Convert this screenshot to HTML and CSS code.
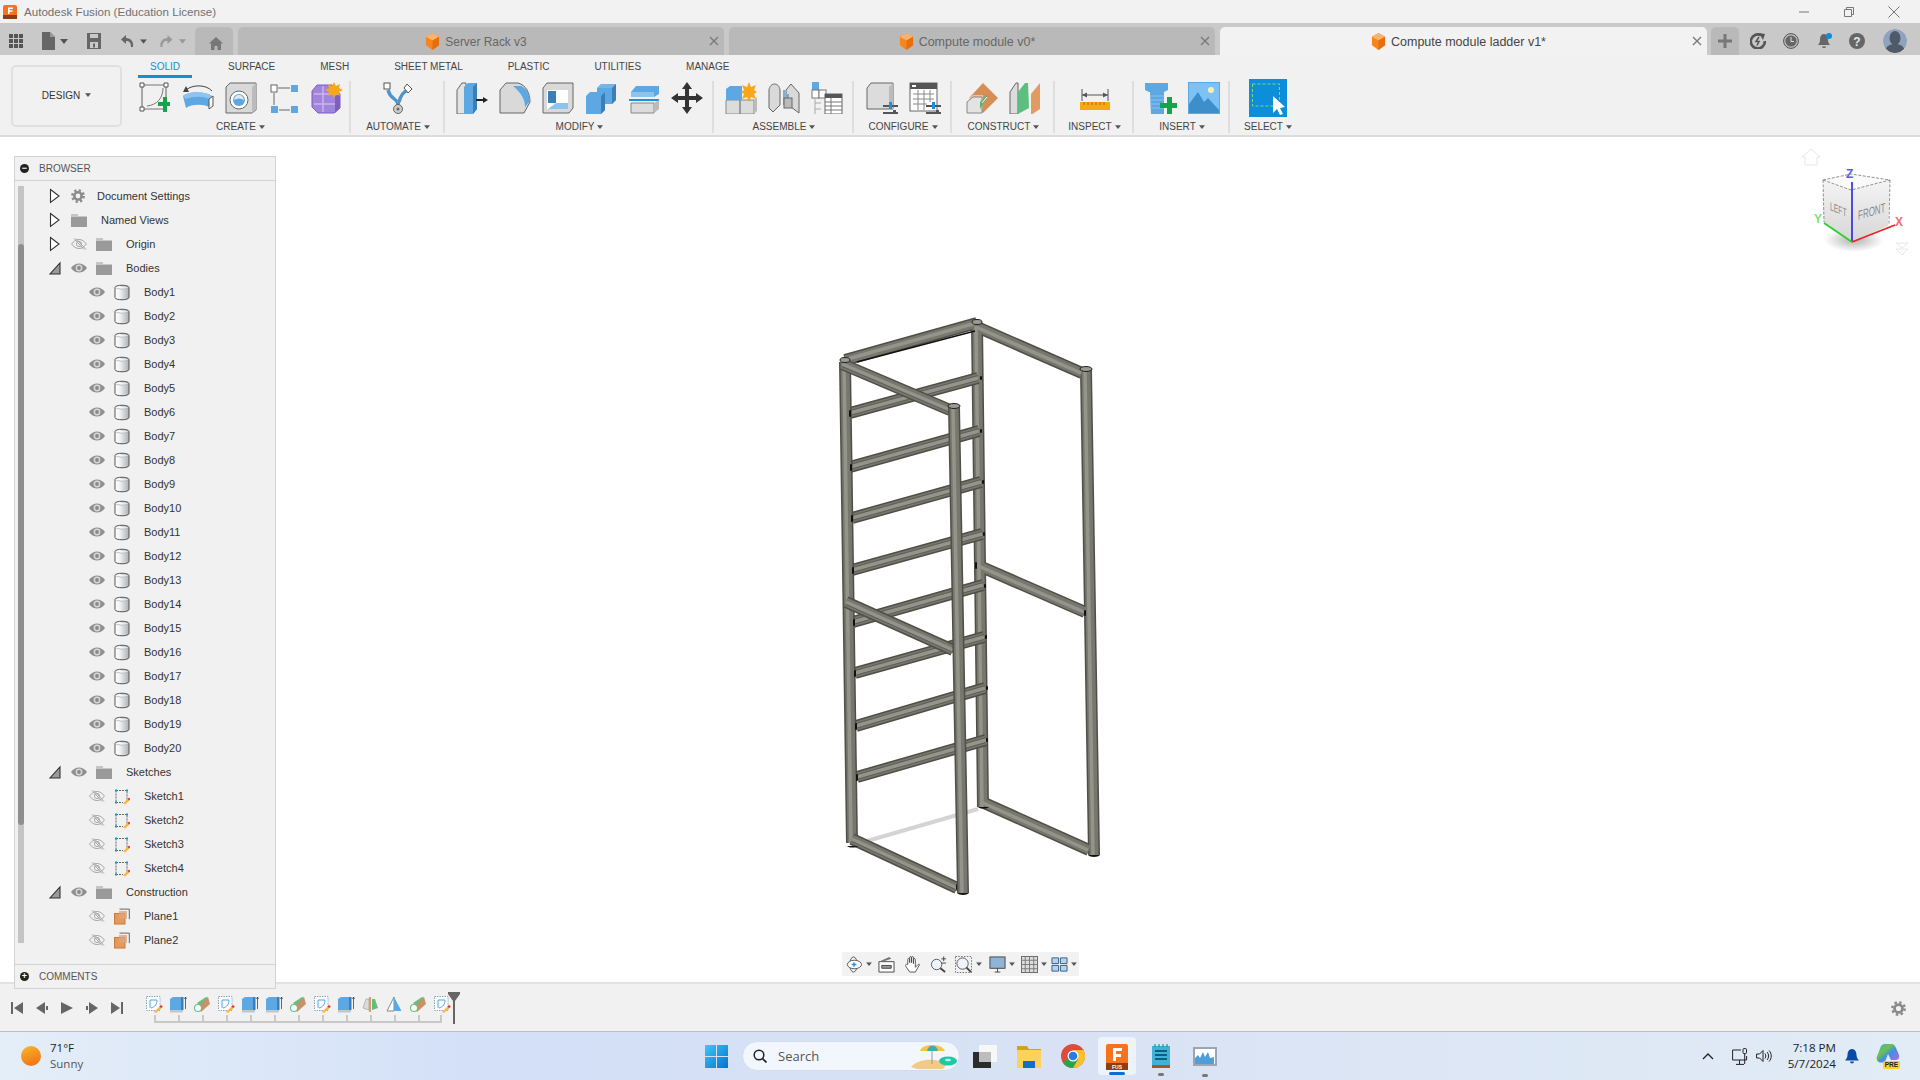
FILE: index.html
```html
<!DOCTYPE html>
<html lang="en">
<head>
<meta charset="utf-8">
<title>Autodesk Fusion</title>
<link rel="stylesheet" href="styles.css">
</head>
<body>
<svg class="defs" width="0" height="0" aria-hidden="true">
  <defs>
    <linearGradient id="bodyg" x1="0" x2="1"><stop offset="0" stop-color="#fff"/><stop offset=".35" stop-color="#f2f2f2"/><stop offset="1" stop-color="#a9aeb6"/></linearGradient>
    <symbol id="cube" viewBox="0 0 16 18"><path d="M8 0l7 4v9l-7 5-7-5V4z" fill="#f5861f"/><path d="M8 0l7 4-7 4-7-4z" fill="#fbb26c"/><path d="M8 8l7-4v9l-7 5z" fill="#e56f0c"/></symbol>
    <symbol id="x" viewBox="0 0 10 10"><path d="M1 1l8 8M9 1l-8 8" stroke="#777" stroke-width="1.3" fill="none"/></symbol>
    <symbol id="arrow-r" viewBox="0 0 12 16"><path d="M1.5 1.5L10 8l-8.500 6.500z" fill="#fff" stroke="#333" stroke-width="1.100"/></symbol>
    <symbol id="arrow-d" viewBox="0 0 12 16"><path d="M11 3v11H1z" fill="#999" stroke="#333" stroke-width="1.100"/></symbol>
    <symbol id="eye" viewBox="0 0 16 12"><path d="M0 6c4-6 12-6 16 0-4 6-12 6-16 0z" fill="#8f8f8f"/><circle cx="8" cy="6" r="3.400" fill="#d6d6d6"/><circle cx="8" cy="6" r="1.900" fill="#8a8a8a"/></symbol>
    <symbol id="eye-off" viewBox="0 0 16 12"><path d="M.6 6c4-6 10.800-6 14.800 0-4 6-10.800 6-14.800 0z" fill="none" stroke="#a8a8a8"/><circle cx="8" cy="6" r="2.600" fill="none" stroke="#a8a8a8"/><path d="M3 .5l10 11M5 .5l10 11" stroke="#a8a8a8" fill="none"/></symbol>
    <symbol id="folder" viewBox="0 0 16 13"><path d="M0 0h7v2H0z" fill="#c4c4c4"/><path d="M0 2.500h16V13H0z" fill="#9a9a9a"/></symbol>
    <symbol id="gear" viewBox="0 0 14 14"><circle cx="7" cy="7" r="3.700" fill="none" stroke="#8a8a8a" stroke-width="2.600"/><circle cx="7" cy="7" r="5.800" fill="none" stroke="#8a8a8a" stroke-width="2.200" stroke-dasharray="2.300 2.250"/></symbol>
    <symbol id="body" viewBox="0 0 16 17"><path d="M1 3.500C1 .5 15 .5 15 3.500v10c0 3-14 3-14 0z" fill="url(#bodyg)" stroke="#555"/><path d="M1.500 3.500c2 2 11 2 13 0" fill="#fff" stroke="#999" stroke-width=".6"/></symbol>
    <symbol id="sketch" viewBox="0 0 16 16"><path d="M2 2h11v9M2 2v12h7" fill="none" stroke="#666" stroke-dasharray="2 1"/><path d="M1 1h2v2H1zM1 13h2v2H1zM12 1h2v2h-2z" fill="#1c8fe0"/><path d="M9 15l5-5 2 1.500-5 4.500z" fill="#f6b73c"/><circle cx="15" cy="10.500" r="1.200" fill="#ee4040"/></symbol>
    <symbol id="plane" viewBox="0 0 16 16"><path d="M5.500.6h9.800v10" fill="none" stroke="#666"/><rect x=".5" y="5" width="10.500" height="10.500" fill="#e39a5c" stroke="#c87a3a"/><rect x="5" y="2.500" width="8" height="8" fill="#d9a67e" opacity=".8"/></symbol>
    <symbol id="caret" viewBox="0 0 8 5"><path d="M0 0h8L4 5z" fill="#555"/></symbol>
    <symbol id="tl-sketch" viewBox="0 0 17 17"><rect x=".5" y=".5" width="13.500" height="14" fill="#fff" stroke="#8ab" stroke-dasharray="1.500 1"/><path d="M4 4h7M4 4v8M11 4c0 4-2 7-6 8" fill="none" stroke="#2a8fdc" stroke-width=".8"/><path d="M8 16l6-6 2 1.500-6 5.500z" fill="#f6b73c"/><circle cx="15.200" cy="10.500" r="1.300" fill="#ee3030"/></symbol>
    <symbol id="tl-ext" viewBox="0 0 17 17"><rect x="0" y="13" width="13" height="3.500" fill="#c6c6c6"/><path d="M0 3l3-2h10v13H0z" fill="#5da7e2"/><path d="M11 1h2.500v13H11z" fill="#3a7fb8"/><path d="M15.500 13V1M14.500 3l1-2 1 2" stroke="#444" fill="none" stroke-width=".8"/></symbol>
    <symbol id="tl-pipe" viewBox="0 0 17 17"><path d="M4 8L14 1l2 7-9 8z" fill="#c99168"/><path d="M3 7l9-6 2 1L5 9z" fill="#67bd80"/><circle cx="4" cy="12" r="3.500" fill="#fff" stroke="#67bd80" stroke-width="1.100"/></symbol>
    <symbol id="tl-mid" viewBox="0 0 17 17"><path d="M1 12l3-9h3v11z" fill="#dcdcdc" stroke="#999" stroke-width=".6"/><path d="M10 3h3l3 9-6 2z" fill="#67bd80"/><path d="M7 1h2v15H7z" fill="#e09a62"/></symbol>
    <symbol id="tl-draft" viewBox="0 0 17 17"><path d="M8 1L1 15h7z" fill="#fff" stroke="#888"/><path d="M8 1l7.500 14H8z" fill="#5da7e2"/></symbol>
  </defs>
</svg>

<header class="titlebar">
  <div class="title-left">
    <svg class="app-icon" viewBox="0 0 14 14"><rect width="14" height="14" rx="2" fill="#f37321"/><rect y="10" width="14" height="4" fill="#8d3e13"/><path d="M5 2.500h5v1.400H6.600v1.400H9.500v1.400H6.600V9H5z" fill="#fff"/></svg>
    <span class="app-title">Autodesk Fusion (Education License)</span>
  </div>
  <div class="win-controls">
    <svg class="win-btn" viewBox="0 0 12 12"><path d="M1 6h10" stroke="#777" fill="none"/></svg>
    <svg class="win-btn" viewBox="0 0 12 12"><path d="M1.500 3.500h7v7h-7zM3.500 3.500v-2h7v7h-2" stroke="#777" fill="none"/></svg>
    <svg class="win-btn" viewBox="0 0 12 12"><path d="M.5.500l11 11M11.500.500l-11 11" stroke="#777" fill="none"/></svg>
  </div>
</header>

<nav class="tabbar">
  <svg class="q-grid" viewBox="0 0 14 14"><path d="M0 0h4v4H0zM5 0h4v4H5zM10 0h4v4h-4zM0 5h4v4H0zM5 5h4v4H5zM10 5h4v4h-4zM0 10h4v4H0zM5 10h4v4H5zM10 10h4v4h-4z" fill="#555"/></svg>
  <svg class="q-file" viewBox="0 0 13 18"><path d="M0 0h8l5 5v13H0z" fill="#666"/><path d="M8 0l5 5H8z" fill="#999"/></svg>
  <svg class="q-caret-a" viewBox="0 0 8 5"><use href="#caret"/></svg>
  <svg class="q-save" viewBox="0 0 14 16"><path d="M0 0h14v16H0z" fill="#666"/><path d="M3 1h8v4H3z" fill="#c9c9c9"/><path d="M3 9h8v6H3z" fill="#c9c9c9"/><path d="M6 10.500h2v4H6z" fill="#666"/></svg>
  <svg class="q-undo" viewBox="0 0 14 14"><path d="M6 1L1 5.500 6 10V7c3 0 5 1 5 6h2c1-5-2-9-7-9z" fill="#666"/></svg>
  <svg class="q-caret-b" viewBox="0 0 8 5"><use href="#caret"/></svg>
  <svg class="q-redo" viewBox="0 0 14 14"><path d="M8 1l5 4.500L8 10V7C5 7 3 8 3 13H1C0 8 3 4 8 4z" fill="#9a9a9a"/></svg>
  <svg class="q-caret-c" viewBox="0 0 8 5"><path d="M0 0h8L4 5z" fill="#999"/></svg>
  <div class="tab tab-home"><svg class="home-ic" viewBox="0 0 14 13"><path d="M7 0l7 6.500h-2V13H8.500V9h-3v4H2V6.500H0z" fill="#777"/></svg></div>
  <div class="tab"><span></span><span class="tab-mid"><svg class="cube"><use href="#cube"/></svg><span class="tab-name tab-name-sm">Server Rack v3</span></span><svg class="tab-x"><use href="#x"/></svg></div>
  <div class="tab"><span></span><span class="tab-mid"><svg class="cube"><use href="#cube"/></svg><span class="tab-name">Compute module v0*</span></span><svg class="tab-x"><use href="#x"/></svg></div>
  <div class="tab tab-active"><span></span><span class="tab-mid"><svg class="cube"><use href="#cube"/></svg><span class="tab-name">Compute module ladder v1*</span></span><svg class="tab-x"><use href="#x"/></svg></div>
  <div class="tab tab-plus"><svg class="plus-ic" viewBox="0 0 14 14"><path d="M5.500 0h3v5.500H14v3H8.500V14h-3V8.500H0v-3h5.500z" fill="#777"/></svg></div>
  <svg class="hd-ic hd-first" viewBox="0 0 16 16"><path d="M11 2.200A7 7 0 1 0 14.800 8" fill="none" stroke="#555" stroke-width="2.600"/><path d="M9 0l6 1-2 6z" fill="#555"/><path d="M9 4L6 8.500h3L7 12.500" fill="none" stroke="#555" stroke-width="1.500"/></svg>
  <svg class="hd-ic" viewBox="0 0 16 16"><circle cx="8" cy="8" r="7.400" fill="#bbb" stroke="#555" stroke-width="1"/><circle cx="8" cy="8" r="5.600" fill="#666"/><path d="M8 4v4.500h3" stroke="#ddd" fill="none"/></svg>
  <span class="bell-wrap"><svg class="hd-ic" viewBox="0 0 16 16"><path d="M8 1c3 0 4 3 4 6 0 2 1 4 2 5H2c1-1 2-3 2-5 0-3 1-6 4-6z" fill="#666"/><path d="M6 13.500h4c0 2-4 2-4 0z" fill="#666"/></svg><span class="bell-dot"></span></span>
  <svg class="hd-ic" viewBox="0 0 16 16"><circle cx="8" cy="8" r="8" fill="#666"/><text x="8" y="12.500" text-anchor="middle" class="help-q">?</text></svg>
  <svg class="avatar" viewBox="0 0 24 24"><defs><clipPath id="avc"><circle cx="12" cy="12" r="12"/></clipPath></defs><circle cx="12" cy="12" r="12" fill="#8fa3bf"/><g clip-path="url(#avc)"><ellipse cx="12" cy="9" rx="5.500" ry="7" fill="#4e5a68"/><path d="M2 24c0-7 5-9 10-9s10 2 10 9z" fill="#4e5a68"/></g></svg>
</nav>

<section class="toolbar">
  <button class="design-btn">DESIGN <svg class="caret"><use href="#caret"/></svg></button>
  <div class="tool-right">
    <div class="mode-tabs">
      <span class="mode mode-on">SOLID</span><span class="mode">SURFACE</span><span class="mode">MESH</span><span class="mode">SHEET METAL</span><span class="mode">PLASTIC</span><span class="mode">UTILITIES</span><span class="mode">MANAGE</span>
    </div>
    <div class="groups">
      <div class="group w-create">
        <div class="tools">
          <svg class="tool" viewBox="0 0 32 32"><path d="M3 3h24v24H3z" fill="none" stroke="#777" stroke-width="1.200"/><path d="M1 1h4v4H1zM25 1h4v4h-4zM1 25h4v4H1z" fill="#fff" stroke="#555"/><path d="M24 6c0 10-6 17-16 18" fill="none" stroke="#777"/><path d="M20 19h5v-5h4v5h3v4h-3v6h-4v-6h-5z" transform="translate(-1 1) scale(1)" fill="#16a34a"/></svg>
          <svg class="tool" viewBox="0 0 32 32"><path d="M1 14c6-5 22-5 29 0l-3 11c-5-3-18-3-23 1z" fill="#5da7e2"/><path d="M1 14c6-5 22-5 29 0l-3 3c-6-3-16-3-23 0z" fill="#8cc4ee"/><path d="M27 17l4-3v10l-4 3z" fill="#fff" stroke="#555"/><path d="M2 10C8 2 24 2 30 9" fill="none" stroke="#444"/><path d="M4 4L1 10l6 0z" fill="#444"/></svg>
          <svg class="tool" viewBox="0 0 32 32"><path d="M1 5l4-4h26v27l-4 3H1z" fill="#d9d9d9" stroke="#666"/><path d="M27 5l4-4v27l-4 3z" fill="#bbb"/><circle cx="14" cy="18" r="9" fill="#fff" stroke="#666"/><circle cx="14" cy="18" r="6" fill="#5da7e2"/><path d="M9 18a5 5 0 0 1 10 0 7 5 0 0 0-10 0z" fill="#dfe9f1"/></svg>
          <svg class="tool" viewBox="0 0 32 32"><rect x="3" y="3" width="6" height="7" fill="#fff" stroke="#666"/><rect x="23" y="3" width="7" height="7" fill="#5da7e2"/><rect x="3" y="24" width="7" height="7" fill="#5da7e2"/><rect x="23" y="24" width="7" height="7" fill="#5da7e2"/><path d="M10 6h12M11 28h11M6 11v12" stroke="#666" fill="none"/></svg>
          <svg class="tool" viewBox="0 0 32 32"><path d="M6 3h15l8 9v14l-6 5H7l-6-6V9z" fill="#a184db" stroke="#7d5fc2"/><path d="M3 12h24M3 22h22M12 4v26" stroke="#c8b7ee" stroke-width="1.500" fill="none"/><path d="M24 14l5-2v14l-5 5z" fill="#7d5fc2"/><path d="M23 0l2 4 4-2-1 4 4 2-4 2 1 4-4-2-2 4-2-4-4 2 1-4-4-2 4-2-1-4 4 2z" fill="#f9a71a"/></svg>
        </div>
        <div class="group-label">CREATE <svg class="caret"><use href="#caret"/></svg></div>
      </div>
      <div class="group w-automate">
        <div class="tools">
          <svg class="tool" viewBox="0 0 32 32"><path d="M6 8c2 8 7 8 9 12M26 8c-3 1-7 4-9 12" fill="none" stroke="#4d93cc" stroke-width="3.400"/><path d="M16 20v4" stroke="#4d93cc" stroke-width="4"/><rect x="2" y="1" width="6" height="6" fill="#fff" stroke="#555"/><path d="M25 2l5 5-4 4-4-5z" fill="#fff" stroke="#555"/><circle cx="16" cy="27" r="4.500" fill="#ccc" stroke="#666"/><circle cx="16" cy="27" r="1.500" fill="#666"/></svg>
        </div>
        <div class="group-label">AUTOMATE <svg class="caret"><use href="#caret"/></svg></div>
      </div>
      <div class="group w-modify">
        <div class="tools">
          <svg class="tool" viewBox="0 0 32 32"><path d="M1 8l5-7h4v31H1z" fill="#e3e3e3" stroke="#666"/><path d="M8 5l4-4h9v26l-4 5H8z" fill="#5da7e2"/><path d="M17 5l4-4v26l-4 5z" fill="#3a7fb8"/><path d="M20 18h9" stroke="#222" stroke-width="2"/><path d="M32 18l-5-3v6z" fill="#222"/></svg>
          <svg class="tool" viewBox="0 0 32 32"><path d="M1 8l6-7h12c8 2 12 10 12 19l-6 11H1z" fill="#d9d9d9" stroke="#666"/><path d="M14 4h8c5 2 9 8 9 15l-5 6c0-8-4-14-12-21z" fill="#5da7e2"/></svg>
          <svg class="tool" viewBox="0 0 32 32"><path d="M1 6l4-5h26v25l-4 5H1z" fill="#d9d9d9" stroke="#666"/><path d="M5 8h21v19H5z" fill="#fff"/><path d="M6 9h8v12H6z" fill="#3a7fb8"/><path d="M6 27l8-6h12v6z" fill="#8cc4ee"/></svg>
          <svg class="tool" viewBox="0 0 32 32"><path d="M12 6l4-4h15v16l-4 4H12z" fill="#5da7e2"/><path d="M12 6h15v16l4-4V2H16z" fill="#8cc4ee" opacity=".5"/><path d="M1 14l4-4h15v18l-4 4H1z" fill="#5da7e2"/><path d="M27 6l4-4v16l-4 4z" fill="#3a7fb8"/><path d="M16 14l4-4v18l-4 4z" fill="#3a7fb8"/></svg>
          <svg class="tool" viewBox="0 0 32 32"><path d="M3 10l5-6h23v8l-5 3H3z" fill="#5da7e2"/><path d="M3 10h23v5H3z" fill="#8cc4ee"/><path d="M1 18h30" stroke="#1c8fe0" stroke-width="2"/><path d="M3 21h23v10H3z" fill="#dcdcdc" stroke="#888"/><path d="M26 21l5-3v9l-5 4z" fill="#bbb"/></svg>
          <svg class="tool" viewBox="0 0 32 32"><path d="M16 0l5 7h-3v7h7v-3l7 5-7 5v-3h-7v7h3l-5 7-5-7h3v-7H7v3l-7-5 7-5v3h7V7h-3z" fill="#333"/></svg>
        </div>
        <div class="group-label">MODIFY <svg class="caret"><use href="#caret"/></svg></div>
      </div>
      <div class="group w-assemble">
        <div class="tools">
          <svg class="tool" viewBox="0 0 32 32"><path d="M1 18h14v14H1zM15 18h14v14H15z" fill="#dcdcdc" stroke="#888"/><path d="M29 18l3-3v14l-3 3z" fill="#bbb"/><path d="M1 7l4-3h12v14H1z" fill="#5da7e2"/><path d="M24 0l2 5 5-2-2 5 3 2-3 2 2 5-5-2-2 5-2-5-5 2 2-5-3-2 3-2-2-5 5 2z" fill="#f9a71a"/></svg>
          <svg class="tool" viewBox="0 0 32 32"><path d="M1 8c1-8 10-8 11 0v15l-7 7-4-4z" fill="#d9d9d9" stroke="#666"/><path d="M18 8l5-6 8 9v20l-8-6H18z" fill="#d9d9d9" stroke="#666"/><path d="M16 8v15M20 12v12" stroke="#4d93cc" fill="none" stroke-width="1.400"/><rect x="16" y="16" width="8" height="10" fill="#bbb" stroke="#666"/></svg>
          <svg class="tool" viewBox="0 0 32 32"><rect x="1" y="0" width="7" height="8" fill="#5da7e2"/><rect x="1" y="8" width="7" height="8" fill="#fff" stroke="#777"/><rect x="8" y="8" width="7" height="8" fill="#fff" stroke="#777"/><path d="M4 17v15M4 21h6M4 27h6" stroke="#aaa" fill="none"/><rect x="14" y="12" width="17" height="20" fill="#fff" stroke="#666"/><rect x="14" y="12" width="17" height="4" fill="#555"/><path d="M14 20h17M14 24h17M14 28h17M20 16v16" stroke="#777" fill="none"/></svg>
        </div>
        <div class="group-label">ASSEMBLE <svg class="caret"><use href="#caret"/></svg></div>
      </div>
      <div class="group w-config">
        <div class="tools">
          <svg class="tool" viewBox="0 0 32 32"><path d="M1 6l4-5h22v26H1z" fill="#dcdcdc" stroke="#666"/><path d="M23 5l4-4v26h-4z" fill="#bbb"/><path d="M17 24h15M17 31h15" stroke="#555" stroke-width="2"/><path d="M23 20h3v7h-3z" fill="#1c8fe0"/><path d="M27 28h3v4h-3z" fill="#555"/></svg>
          <svg class="tool" viewBox="0 0 32 32"><rect x="1" y="1" width="27" height="28" fill="#fff" stroke="#666"/><rect x="1" y="1" width="27" height="6" fill="#555"/><rect x="3" y="3" width="4" height="2" fill="#fff"/><path d="M4 12h21M4 17h21M4 22h14M9 8v20M15 8v20M21 8v12" stroke="#888" fill="none"/><path d="M17 24h15M17 31h15" stroke="#555" stroke-width="2"/><path d="M23 20h3v7h-3z" fill="#1c8fe0"/><path d="M27 28h3v4h-3z" fill="#555"/></svg>
        </div>
        <div class="group-label">CONFIGURE <svg class="caret"><use href="#caret"/></svg></div>
      </div>
      <div class="group w-construct">
        <div class="tools">
          <svg class="tool" viewBox="0 0 32 32"><path d="M17 1l15 15-15 15L3 16z" fill="#d68d56"/><path d="M3 16l4-3h10v14H3z" fill="#f2d9c2" opacity=".7"/><path d="M1 20l6-5h9v16H1z" fill="#e3e3e3" stroke="#888"/><path d="M14 20l7-7 1 1-8 13z" fill="#58b46f"/><path d="M16 21l5-6" stroke="#fff"/></svg>
          <svg class="tool" viewBox="0 0 32 32"><path d="M1 10l6-9h2v31H1z" fill="#dcdcdc" stroke="#666"/><path d="M9 10l7-9h3l1 25-11 6z" fill="#5cbf80"/><path d="M22 12l9-11v26l-9 6z" fill="#e09a62"/></svg>
        </div>
        <div class="group-label">CONSTRUCT <svg class="caret"><use href="#caret"/></svg></div>
      </div>
      <div class="group w-inspect">
        <div class="tools">
          <svg class="tool" viewBox="0 0 32 32"><path d="M3 7v12M29 7v12M3 13h26" stroke="#555" fill="none"/><path d="M3 13l5-2.500v5zM29 13l-5-2.500v5z" fill="#555"/><rect x="1" y="20" width="30" height="8" fill="#f9a71a"/><path d="M5 20v3M9 20v3M13 20v3M17 20v3M21 20v3M25 20v3" stroke="#a86e05" fill="none"/></svg>
        </div>
        <div class="group-label">INSPECT <svg class="caret"><use href="#caret"/></svg></div>
      </div>
      <div class="group w-insert">
        <div class="tools">
          <svg class="tool" viewBox="0 0 32 32"><path d="M0 1h23v7l-4 2H4L0 8z" fill="#5da7e2"/><path d="M5 10h14v22H6z" fill="#5da7e2"/><path d="M5 14h14M5 18h14M5 22h14M5 26h14" stroke="#8cc4ee" fill="none"/><path d="M15 21h7v-6h5v6h5v5h-5v6h-5v-6h-7z" fill="#16a34a"/></svg>
          <svg class="tool" viewBox="0 0 32 32"><rect x=".5" y=".5" width="31" height="31" fill="#7ec2f5" stroke="#5da7e2"/><circle cx="23" cy="8" r="3" fill="#ffeeb0"/><path d="M1 31V22l9-12 6 10 4-4 11 12v3z" fill="#3d8fcb"/></svg>
        </div>
        <div class="group-label">INSERT <svg class="caret"><use href="#caret"/></svg></div>
      </div>
      <div class="group w-select">
        <div class="tools">
          <svg class="tool-lg" viewBox="0 0 38 38"><rect width="38" height="38" fill="#0c8ed9"/><rect x="3.500" y="5" width="27" height="22" fill="none" stroke="#7ed87e" stroke-dasharray="3 2"/><path d="M24 17v17l4-4 3 6 3-1-3-6 5-1z" fill="#fff"/></svg>
        </div>
        <div class="group-label">SELECT <svg class="caret"><use href="#caret"/></svg></div>
      </div>
    </div>
  </div>
</section>

<main class="canvas">
  <aside class="browser">
    <div class="panel-head"><span class="round-ic">&#8722;</span>BROWSER</div>
    <div class="tree-wrap">
      <div class="scrollbar"><div class="thumb"></div></div>
      <div class="tree">
        <div class="row lv0"><svg class="s-arrow"><use href="#arrow-r"/></svg><svg class="s-gear"><use href="#gear"/></svg><span>Document Settings</span></div>
        <div class="row lv0"><svg class="s-arrow"><use href="#arrow-r"/></svg><svg class="s-folder"><use href="#folder"/></svg><span>Named Views</span></div>
        <div class="row lv0"><svg class="s-arrow"><use href="#arrow-r"/></svg><svg class="s-eye"><use href="#eye-off"/></svg><svg class="s-folder"><use href="#folder"/></svg><span>Origin</span></div>
        <div class="row lv0"><svg class="s-arrow"><use href="#arrow-d"/></svg><svg class="s-eye"><use href="#eye"/></svg><svg class="s-folder"><use href="#folder"/></svg><span>Bodies</span></div>
        <div class="row lv1"><svg class="s-eye"><use href="#eye"/></svg><svg class="s-item"><use href="#body"/></svg><span>Body1</span></div>
        <div class="row lv1"><svg class="s-eye"><use href="#eye"/></svg><svg class="s-item"><use href="#body"/></svg><span>Body2</span></div>
        <div class="row lv1"><svg class="s-eye"><use href="#eye"/></svg><svg class="s-item"><use href="#body"/></svg><span>Body3</span></div>
        <div class="row lv1"><svg class="s-eye"><use href="#eye"/></svg><svg class="s-item"><use href="#body"/></svg><span>Body4</span></div>
        <div class="row lv1"><svg class="s-eye"><use href="#eye"/></svg><svg class="s-item"><use href="#body"/></svg><span>Body5</span></div>
        <div class="row lv1"><svg class="s-eye"><use href="#eye"/></svg><svg class="s-item"><use href="#body"/></svg><span>Body6</span></div>
        <div class="row lv1"><svg class="s-eye"><use href="#eye"/></svg><svg class="s-item"><use href="#body"/></svg><span>Body7</span></div>
        <div class="row lv1"><svg class="s-eye"><use href="#eye"/></svg><svg class="s-item"><use href="#body"/></svg><span>Body8</span></div>
        <div class="row lv1"><svg class="s-eye"><use href="#eye"/></svg><svg class="s-item"><use href="#body"/></svg><span>Body9</span></div>
        <div class="row lv1"><svg class="s-eye"><use href="#eye"/></svg><svg class="s-item"><use href="#body"/></svg><span>Body10</span></div>
        <div class="row lv1"><svg class="s-eye"><use href="#eye"/></svg><svg class="s-item"><use href="#body"/></svg><span>Body11</span></div>
        <div class="row lv1"><svg class="s-eye"><use href="#eye"/></svg><svg class="s-item"><use href="#body"/></svg><span>Body12</span></div>
        <div class="row lv1"><svg class="s-eye"><use href="#eye"/></svg><svg class="s-item"><use href="#body"/></svg><span>Body13</span></div>
        <div class="row lv1"><svg class="s-eye"><use href="#eye"/></svg><svg class="s-item"><use href="#body"/></svg><span>Body14</span></div>
        <div class="row lv1"><svg class="s-eye"><use href="#eye"/></svg><svg class="s-item"><use href="#body"/></svg><span>Body15</span></div>
        <div class="row lv1"><svg class="s-eye"><use href="#eye"/></svg><svg class="s-item"><use href="#body"/></svg><span>Body16</span></div>
        <div class="row lv1"><svg class="s-eye"><use href="#eye"/></svg><svg class="s-item"><use href="#body"/></svg><span>Body17</span></div>
        <div class="row lv1"><svg class="s-eye"><use href="#eye"/></svg><svg class="s-item"><use href="#body"/></svg><span>Body18</span></div>
        <div class="row lv1"><svg class="s-eye"><use href="#eye"/></svg><svg class="s-item"><use href="#body"/></svg><span>Body19</span></div>
        <div class="row lv1"><svg class="s-eye"><use href="#eye"/></svg><svg class="s-item"><use href="#body"/></svg><span>Body20</span></div>
        <div class="row lv0"><svg class="s-arrow"><use href="#arrow-d"/></svg><svg class="s-eye"><use href="#eye"/></svg><svg class="s-folder"><use href="#folder"/></svg><span>Sketches</span></div>
        <div class="row lv1"><svg class="s-eye"><use href="#eye-off"/></svg><svg class="s-item"><use href="#sketch"/></svg><span>Sketch1</span></div>
        <div class="row lv1"><svg class="s-eye"><use href="#eye-off"/></svg><svg class="s-item"><use href="#sketch"/></svg><span>Sketch2</span></div>
        <div class="row lv1"><svg class="s-eye"><use href="#eye-off"/></svg><svg class="s-item"><use href="#sketch"/></svg><span>Sketch3</span></div>
        <div class="row lv1"><svg class="s-eye"><use href="#eye-off"/></svg><svg class="s-item"><use href="#sketch"/></svg><span>Sketch4</span></div>
        <div class="row lv0"><svg class="s-arrow"><use href="#arrow-d"/></svg><svg class="s-eye"><use href="#eye"/></svg><svg class="s-folder"><use href="#folder"/></svg><span>Construction</span></div>
        <div class="row lv1"><svg class="s-eye"><use href="#eye-off"/></svg><svg class="s-item"><use href="#plane"/></svg><span>Plane1</span></div>
        <div class="row lv1"><svg class="s-eye"><use href="#eye-off"/></svg><svg class="s-item"><use href="#plane"/></svg><span>Plane2</span></div>
      </div>
    </div>
    <div class="panel-foot"><span class="round-ic">+</span>COMMENTS</div>
  </aside>

  <svg class="rack" viewBox="820 300 300 640">
    <defs>
      <g id="rk-back">
        <line x1="977" y1="326" x2="983" y2="807"/>
        <line x1="1086" y1="370" x2="1094" y2="855"/>
        <line x1="977" y1="327" x2="1082" y2="373"/>
        <line x1="977" y1="565" x2="1085" y2="612"/>
        <line x1="982" y1="802" x2="1089" y2="850"/>
        <line x1="845" y1="360" x2="977" y2="323"/>
      </g>
      <g id="rk-rungs">
        <line x1="850" y1="413" x2="978" y2="378"/>
        <line x1="850" y1="467" x2="979" y2="431"/>
        <line x1="852" y1="518" x2="981" y2="482"/>
        <line x1="852" y1="570" x2="982" y2="534"/>
        <line x1="853" y1="622" x2="983" y2="585"/>
        <line x1="855" y1="673" x2="984" y2="637"/>
        <line x1="856" y1="726" x2="985" y2="688"/>
        <line x1="857" y1="777" x2="986" y2="740"/>
      </g>
      <g id="rk-left">
        <line x1="845" y1="362" x2="852" y2="843"/>
      </g>
      <g id="rk-side">
        <line x1="842" y1="364" x2="950" y2="410"/>
        <line x1="846" y1="602" x2="953" y2="650"/>
        <line x1="852" y1="839" x2="957" y2="888"/>
      </g>
      <g id="rk-front">
        <line x1="954" y1="407" x2="963" y2="893"/>
      </g>
    </defs>
    <line class="rk-shadow" x1="867" y1="841" x2="978" y2="809"/>
    <use href="#rk-back" class="tb-a"/><use href="#rk-back" class="tb-b"/><use href="#rk-back" class="tb-c" transform="translate(-1 0)"/>
    <line class="rk-black" x1="857" y1="362" x2="975" y2="331"/>
    <use href="#rk-rungs" class="tb-a"/><use href="#rk-rungs" class="tb-b"/><use href="#rk-rungs" class="tb-c"/><use href="#rk-rungs" class="tb-d" transform="translate(0 2.500)"/><use href="#rk-rungs" class="tb-d" transform="translate(0 -2.500)"/>
    <use href="#rk-left" class="tb-a"/><use href="#rk-left" class="tb-b"/><use href="#rk-left" class="tb-c" transform="translate(-1 0)"/>
    <use href="#rk-side" class="tb-a"/><use href="#rk-side" class="tb-b"/><use href="#rk-side" class="tb-c"/><use href="#rk-side" class="tb-d" transform="translate(0 2.500)"/>
    <path class="rk-dots" d="M850 411v5M851 465v5M852 516v5M853 568v5M854 620v5M855 671v5M856 724v5M857 775v5M981 377v2M981 430v2M983 481v2M984 533v2M985 585v2M986 636v2M987 687v2M987 739v2M976 563v5M1085 611v4M957 885v4"/>
    <use href="#rk-front" class="tb-a"/><use href="#rk-front" class="tb-b"/><use href="#rk-front" class="tb-c" transform="translate(-1 0)"/>
    <ellipse class="rk-cap" cx="954" cy="406" rx="6" ry="2.500"/>
    <ellipse class="rk-cap" cx="1086" cy="369" rx="6" ry="2.500"/>
    <ellipse class="rk-cap" cx="977" cy="322" rx="5" ry="2.500"/>
    <ellipse class="rk-cap" cx="845" cy="360" rx="5" ry="2.500"/>
    <path class="rk-foot" d="M847 846h11c-2 2-9 2-11 0zM957 893h12c-2 2.500-10 2.500-12 0zM978 807h11c-2 2-9 2-11 0zM1088 855h12c-2 2.500-10 2.500-12 0z"/>
  </svg>

  <div class="navbar">
    <svg class="nav-ic" viewBox="0 0 18 18"><ellipse cx="9" cy="9" rx="4" ry="8" fill="none" stroke="#555"/><ellipse cx="10" cy="9" rx="7.500" ry="4.500" fill="#fff" stroke="#555"/><path d="M7 9h5M9.500 6.500v5" stroke="#1c8fe0" stroke-width="1.400"/></svg>
    <svg class="nav-c nav-gap-a" viewBox="0 0 8 5"><use href="#caret"/></svg>
    <svg class="nav-ic nav-gap-b" viewBox="0 0 18 18"><path d="M1 6h16v11H1z" fill="#fff" stroke="#444"/><path d="M4 10h10v3H4z" fill="#999" stroke="#444"/><path d="M3 5l9-4 2 2-9 3z" fill="#777"/></svg>
    <svg class="nav-ic nav-gap-c" viewBox="0 0 18 18"><path d="M4 9V4c0-2 2-2 2 0v3-5c0-2 2-2 2 0v5-5c0-2 2-2 2 0v6-4c0-2 2-2 2 0v8l3-3c1-1 2 0 1 1l-4 7H6L2 11c-1-1 0-3 2-2z" fill="#fff" stroke="#444" stroke-width=".9"/></svg>
    <svg class="nav-ic nav-gap-c" viewBox="0 0 18 18"><circle cx="7" cy="9" r="5.500" fill="#eef4f8" stroke="#556"/><path d="M11 13l5 4" stroke="#444" stroke-width="2"/><path d="M12 3h5M14.500 .5v5M12 7.500h5" stroke="#444"/></svg>
    <svg class="nav-ic nav-gap-d" viewBox="0 0 18 18"><rect x=".5" y=".5" width="17" height="17" fill="none" stroke="#666" stroke-dasharray="1.500 1.500"/><circle cx="8" cy="8" r="6" fill="#eef4f8" stroke="#556"/><path d="M12 12l5 5" stroke="#444" stroke-width="2"/></svg>
    <svg class="nav-c nav-gap-a" viewBox="0 0 8 5"><use href="#caret"/></svg>
    <svg class="nav-ic nav-gap-e" viewBox="0 0 18 18"><rect x="1" y="1" width="16" height="12" fill="#8fb4d8" stroke="#444"/><path d="M6 17h6M9 13v4" stroke="#444"/></svg>
    <svg class="nav-c nav-gap-f" viewBox="0 0 8 5"><use href="#caret"/></svg>
    <svg class="nav-ic nav-gap-g" viewBox="0 0 18 18"><rect x=".5" y=".5" width="17" height="17" fill="#ddd" stroke="#666"/><path d="M4.500 0v18M9 0v18M13.500 0v18M0 4.500h18M0 9h18M0 13.500h18" stroke="#777"/></svg>
    <svg class="nav-c nav-gap-f" viewBox="0 0 8 5"><use href="#caret"/></svg>
    <svg class="nav-ic nav-gap-h" viewBox="0 0 18 18"><path d="M1 2h7v6H1zM10 2h7v6h-7zM1 10h7v6H1zM10 10h7v6h-7z" fill="#b7d2ea" stroke="#2c5f8a"/></svg>
    <svg class="nav-c nav-gap-f" viewBox="0 0 8 5"><use href="#caret"/></svg>
  </div>

  <svg class="viewcube" viewBox="1795 140 125 125">
    <defs>
      <linearGradient id="vcL" x1="0" y1="0" x2="0" y2="1"><stop offset="0" stop-color="#f4f4f4"/><stop offset="1" stop-color="#d6d6d6"/></linearGradient>
      <radialGradient id="vcS"><stop offset="0" stop-color="#000" stop-opacity=".3"/><stop offset="1" stop-color="#000" stop-opacity="0"/></radialGradient>
    </defs>
    <path class="vc-ghost" d="M1811 149l9 8h-3v8h-12v-8h-3z"/>
    <path class="vc-ghost" d="M1896 243h12l-6 5zM1896 249h12l-6 6z"/>
    <ellipse cx="1854" cy="240" rx="30" ry="12" fill="url(#vcS)"/>
    <path d="M1823 180l28 10 39-10-2 46-36 16-28-19z" fill="url(#vcL)"/>
    <path d="M1823 180l28-6 39 6-39 10z" fill="#fafafa"/>
    <path d="M1823 180l28-6 39 6-39 10zM1823 180l1 42M1890 180l-1 45" fill="none" stroke="#777" stroke-dasharray="3 1.500" stroke-width=".8"/>
    <text class="vc-t" transform="matrix(.68 .28 0 1.150 1830 210)">LEFT</text>
    <text class="vc-t" transform="matrix(.8 -.24 0 1.300 1858 220)">FRONT</text>
    <path d="M1852 182v60" stroke="#2323e8" stroke-width="1.600" fill="none"/>
    <path d="M1852 242l43-17" stroke="#ee2020" stroke-width="1.800" fill="none"/>
    <path d="M1852 242l-28-19" stroke="#28d028" stroke-width="1.800" fill="none"/>
    <text class="vc-z" x="1846" y="178">Z</text>
    <text class="vc-x" x="1895" y="226">X</text>
    <text class="vc-y" x="1814" y="223">Y</text>
  </svg>
</main>

<section class="timeline">
  <svg class="tr tr-first" viewBox="0 0 12 12"><path d="M0 0h2v12H0zM12 0v12L3 6z" fill="#666"/></svg>
  <svg class="tr" viewBox="0 0 12 12"><path d="M9 0v12L0 6zM10 4h2v4h-2z" fill="#666"/></svg>
  <svg class="tr" viewBox="0 0 12 12"><path d="M0 0l12 6-12 6z" fill="#666"/></svg>
  <svg class="tr" viewBox="0 0 12 12"><path d="M3 0v12l9-6zM0 4h2v4H0z" fill="#666"/></svg>
  <svg class="tr" viewBox="0 0 12 12"><path d="M0 0v12l9-6zM10 0h2v12h-2z" fill="#666"/></svg>
  <div class="tl-track">
    <div class="tl-icons">
      <svg class="tl-ic"><use href="#tl-sketch"/></svg>
      <svg class="tl-ic"><use href="#tl-ext"/></svg>
      <svg class="tl-ic"><use href="#tl-pipe"/></svg>
      <svg class="tl-ic"><use href="#tl-sketch"/></svg>
      <svg class="tl-ic"><use href="#tl-ext"/></svg>
      <svg class="tl-ic"><use href="#tl-ext"/></svg>
      <svg class="tl-ic"><use href="#tl-pipe"/></svg>
      <svg class="tl-ic"><use href="#tl-sketch"/></svg>
      <svg class="tl-ic"><use href="#tl-ext"/></svg>
      <svg class="tl-ic"><use href="#tl-mid"/></svg>
      <svg class="tl-ic"><use href="#tl-draft"/></svg>
      <svg class="tl-ic"><use href="#tl-pipe"/></svg>
      <svg class="tl-ic"><use href="#tl-sketch"/></svg>
    </div>
    <div class="tl-ruler"></div>
  </div>
  <svg class="tl-marker" viewBox="0 0 12 32"><path d="M0 0h12v2L7 9v23H5V9L0 2z" fill="#666"/></svg>
  <svg class="tl-gear" viewBox="0 0 14 14"><use href="#gear"/></svg>
</section>

<footer class="taskbar">
  <div class="weather">
    <span class="sun"></span>
    <div class="weather-text"><div class="w-temp">71°F</div><div class="w-sky">Sunny</div></div>
  </div>
  <svg class="win-logo" viewBox="0 0 23 23"><defs><linearGradient id="wl" x1="0" y1="0" x2="1" y2="1"><stop offset="0" stop-color="#3bc8f5"/><stop offset="1" stop-color="#0a6fd0"/></linearGradient></defs><path d="M0 0h11v11H0zM12 0h11v11H12zM0 12h11v11H0zM12 12h11v11H12z" fill="url(#wl)"/></svg>
  <div class="search">
    <svg class="search-ic" viewBox="0 0 14 14"><circle cx="6" cy="6" r="4.800" fill="none" stroke="#222" stroke-width="1.500"/><path d="M9.500 9.500L13.500 13.500" stroke="#222" stroke-width="1.700"/></svg>
    <span class="search-text">Search</span>
    <svg class="search-art" viewBox="0 0 47 30"><path d="M0 27c6-8 24-10 36-3l-4 5H6z" fill="#f1c98a"/><path d="M21 6v18" stroke="#999"/><path d="M9 11c2-8 22-8 25 0z" fill="#f6c544"/><path d="M16 11c1-7 10-7 11 0z" fill="#3bb39a"/><ellipse cx="37" cy="21" rx="9" ry="4.500" fill="#20c9a6"/><ellipse cx="37" cy="20" rx="3" ry="1.300" fill="#bff3e6"/></svg>
  </div>
  <svg class="app a-task" viewBox="0 0 24 23"><rect x="6" y="0" width="18" height="17" fill="#f7f7f7"/><rect x="0" y="7" width="18" height="16" fill="#2b2b2b"/><rect x="6" y="7" width="12" height="10" fill="#bdbdbd"/></svg>
  <svg class="app a-folder" viewBox="0 0 24 23"><path d="M0 1h10l2 3h12v19H0z" fill="#d99f1c"/><path d="M0 5h24v18H0z" fill="#fbd25a"/><path d="M6 16h12v7H6z" fill="#1170c4"/></svg>
  <svg class="app a-chrome" viewBox="0 0 24 24"><circle cx="12" cy="12" r="12" fill="#dd4b3e"/><path d="M12 12L1.600 18A12 12 0 0 0 12 24l6-6z" fill="#2ba24c"/><path d="M12 6h10.400A12 12 0 0 1 12 24l5.200-9z" fill="#fbc02d"/><circle cx="12" cy="12" r="5.500" fill="#fff"/><circle cx="12" cy="12" r="4.300" fill="#2a7be4"/></svg>
  <div class="app-active">
    <svg class="a-fus" viewBox="0 0 22 26"><rect width="22" height="26" rx="2" fill="#f37321"/><rect y="19" width="22" height="7" fill="#8d3e13"/><path d="M7 4h9v3h-6v3h5v3h-5v4H7z" fill="#fff"/><text class="fus-t" x="11" y="25">FUS</text></svg>
    <span class="run-bar"></span>
  </div>
  <div class="app-slot s-note"><svg class="a-note" viewBox="0 0 18 24"><rect y="2" width="18" height="20" fill="#3fb2d8"/><rect y="21" width="18" height="3" fill="#9c5a28"/><path d="M3 0v3M7 0v3M11 0v3M15 0v3" stroke="#1f6f90"/><path d="M3 7h12M3 11h12M3 15h12" stroke="#0d5f80" stroke-width="2"/></svg><span class="dot"></span></div>
  <div class="app-slot s-mon"><svg class="a-mon" viewBox="0 0 24 19"><rect x="1" y="1" width="22" height="17" fill="#fff" stroke="#9aa6b2" stroke-width="2"/><path d="M2 17v-6l3-3 2 3 3-6 2 5 3-5 2 6 4-1v7z" fill="#4c9fd8"/></svg><span class="dot"></span></div>
  <div class="tray">
    <svg class="tray-ic caret-up" viewBox="0 0 12 7"><path d="M1 6l5-5 5 5" fill="none" stroke="#222" stroke-width="1.300"/></svg>
    <svg class="tray-net" viewBox="0 0 16 17"><path d="M9 2H.6v10h14V8" fill="none" stroke="#222"/><rect x="11" y=".6" width="3.500" height="5" rx="1" fill="none" stroke="#222"/><path d="M7.500 12v4M4 16.400h8M12.700 6v10" stroke="#222" fill="none"/></svg>
    <svg class="tray-vol" viewBox="0 0 16 14"><path d="M.6 5h3l3.400-3.500v11L3.600 9h-3z" fill="none" stroke="#222"/><path d="M9 4.500c1 1.500 1 3.500 0 5M11 3c2 2 2 6 0 8M13 1.500c3 3 3 8 0 11" fill="none" stroke="#222"/></svg>
    <div class="clock"><div>7:18 PM</div><div>5/7/2024</div></div>
    <svg class="tray-bell" viewBox="0 0 14 15"><path d="M7 0c3 0 4.500 3 4.500 6 0 2 1 4 2.500 5.500H0C1.500 10 2.500 8 2.500 6 2.500 3 4 0 7 0z" fill="#0b4aa8"/><path d="M5 12.500h4c0 2.500-4 2.500-4 0z" fill="#0b4aa8"/></svg>
    <div class="copilot">
      <svg class="cop-ic" viewBox="0 0 24 20"><defs><linearGradient id="cop" x1="0" y1="0" x2="1" y2="1"><stop offset="0" stop-color="#2fb8e8"/><stop offset=".35" stop-color="#6fc04a"/><stop offset=".55" stop-color="#3f8fe8"/><stop offset="1" stop-color="#d05fd8"/></linearGradient></defs><path d="M8 0h8c2 0 3 2 4 4l3 7c1 3-1 5-4 5h-4l-3-6-3 8c-3 1-7 1-8-2-1-2 0-4 1-6l3-8C6 1 7 0 8 0z" fill="url(#cop)"/></svg>
      <span class="pre">PRE</span>
    </div>
  </div>
</footer>
</body>
</html>
```
FILE: styles.css
```css
* { box-sizing: border-box; }
html, body { margin: 0; padding: 0; }
body {
  width: 1920px; height: 1080px; overflow: hidden;
  display: flex; flex-direction: column;
  font-family: "Liberation Sans", Arial, sans-serif;
  background: #fff; color: #333;
}
.defs { position: absolute; }

/* title bar */
.titlebar { height: 23px; background: #f2f2f2; display: flex; justify-content: space-between; align-items: center; flex: none; }
.title-left { display: flex; align-items: center; }
.app-icon { width: 14px; height: 14px; margin-left: 3px; }
.app-title { margin-left: 7px; font-size: 11.600px; color: #707070; }
.win-controls { display: flex; align-items: center; gap: 33px; padding-right: 20px; }
.win-btn { width: 12px; height: 12px; }

/* document tabs */
.tabbar { height: 32px; flex: none; background: #c9c9c9; display: flex; align-items: flex-end; padding-top: 4px; position: relative; }
.tabbar > svg { align-self: center; }
.q-grid { width: 14px; height: 14px; margin-left: 9px; }
.q-file { width: 13px; height: 18px; margin-left: 19px; }
.q-caret-a { width: 8px; height: 5px; margin-left: 5px; }
.q-save { width: 14px; height: 16px; margin-left: 19px; }
.q-undo { width: 14px; height: 14px; margin-left: 19px; }
.q-caret-b { width: 7px; height: 5px; margin-left: 6px; }
.q-redo { width: 15px; height: 14px; margin-left: 12px; }
.q-caret-c { width: 7px; height: 5px; margin-left: 5px; }
.tab {
  height: 28px; width: 486px; margin-left: 5px; background: #b9b9b9;
  border-radius: 5px 5px 0 0; display: grid; grid-template-columns: 1fr auto 1fr;
  align-items: center; padding-right: 10px; font-size: 12.500px; color: #666;
}
.tab-home { width: 38px; margin-left: 9px; display: flex; justify-content: center; padding: 0 0 0 3px; }
.tab-active { background: #f2f2f2; color: #444; width: 487px; }
.tab-plus { width: 28px; margin-left: 4px; display: flex; justify-content: center; padding: 0; }
.home-ic { width: 14px; height: 13px; margin-top: 4px; }
.plus-ic { width: 14px; height: 14px; }
.tab-mid { display: flex; align-items: center; gap: 5px; }
.tab-name { padding-top: 1px; }
.tab-name-sm { font-size: 11.900px; }
.cube { width: 15px; height: 17px; }
.tab-x { width: 10px; height: 10px; justify-self: end; margin-right: -5px; }
.hd-ic { width: 16px; height: 16px; margin-left: 17px; }
.hd-first { margin-left: 11px; }
.bell-wrap { position: relative; display: flex; align-self: center; }
.bell-dot { position: absolute; right: 0; top: 0; width: 6px; height: 6px; border-radius: 50%; background: #0c8ed9; }
.avatar { width: 24px; height: 24px; margin-left: 18px; border-radius: 50%; }
.help-q { font: bold 12px "Liberation Sans", sans-serif; fill: #e8e8e8; }

/* toolbar */
.toolbar { height: 82px; flex: none; background: #f1f1f1; border-bottom: 2px solid #dcdcdc; display: flex; }
.design-btn {
  width: 111px; height: 62px; margin: 10px 8px 0 11px; background: #f1f1f1;
  border: 2px solid #e0e0e0; border-radius: 5px; font: 10px "Liberation Sans", sans-serif; color: #333;
  padding: 0 0 2px; display: flex; align-items: center; justify-content: center; gap: 5px;
}
.caret { width: 6px; height: 4px; }
.tool-right { display: flex; flex-direction: column; }
.mode-tabs { height: 24px; display: flex; gap: 21px; padding-left: 8px; font-size: 10px; color: #444; }
.mode { padding: 0 12px; height: 24px; line-height: 24px; white-space: nowrap; }
.mode-on { color: #0f8fdc; border-bottom: 3px solid #0f8fdc; height: 23px; margin-right: 3px; }
.groups { display: flex; margin-top: 2px; }
.group { height: 52px; display: flex; flex-direction: column; align-items: center; box-shadow: inset -2px 0 #dedede; }
.w-create { width: 221px; } .w-automate { width: 94px; } .w-modify { width: 269px; }
.w-assemble { width: 140px; } .w-config { width: 98px; } .w-construct { width: 103px; }
.w-inspect { width: 79px; } .w-insert { width: 96px; } .w-select { width: 76px; box-shadow: none; }
.tools { height: 33px; display: flex; gap: 11px; align-items: center; }
.tool { width: 32px; height: 32px; flex: none; }
.tool-lg { width: 38px; height: 38px; flex: none; }
.group-label { height: 12px; line-height: 12px; margin-top: 7px; font-size: 10px; color: #444; display: flex; align-items: center; gap: 3px; white-space: nowrap; }

/* canvas */
.canvas { flex: 1; position: relative; background: #fff; min-height: 0; }
.browser {
  position: absolute; left: 14px; top: 19px; width: 262px; height: 833px; z-index: 3;
  background: #f1f1f1; border: 1px solid #d2d2d2; display: flex; flex-direction: column;
}
.panel-head, .panel-foot { display: flex; align-items: center; height: 24px; flex: none; font-size: 10px; color: #555; padding-left: 5px; }
.panel-head { border-bottom: 1px solid #d2d2d2; }
.panel-foot { border-top: 1px solid #d2d2d2; }
.round-ic { width: 9px; height: 9px; margin-right: 10px; border-radius: 50%; background: #222; color: #fff; font: bold 9px/9px "Liberation Sans", sans-serif; text-align: center; }
.tree-wrap { flex: 1; display: flex; min-height: 0; }
.scrollbar { width: 6px; margin: 5px 0 21px 3px; background: #c4c4c4; flex: none; padding-top: 58px; }
.thumb { height: 581px; background: #8e8e8e; border-radius: 3px; }
.tree { padding-top: 3px; flex: 1; margin-left: -9px; }
.row { height: 24px; display: flex; align-items: center; font-size: 11px; color: #333; white-space: nowrap; }
.lv0 { padding-left: 34px; }
.lv1 { padding-left: 74px; }
.s-arrow { width: 12px; height: 16px; margin-right: 10px; flex: none; }
.s-gear { width: 14px; height: 14px; margin-right: 12px; flex: none; }
.s-folder { width: 16px; height: 13px; margin-right: 14px; flex: none; }
.s-eye { width: 16px; height: 12px; margin-right: 9px; flex: none; }
.s-item { width: 16px; height: 17px; margin-right: 14px; flex: none; }

/* rack model */
.rack { position: absolute; left: 820px; top: 163px; width: 300px; height: 640px; }
.tb-a { stroke: #4f4f48; stroke-width: 12; fill: none; }
.tb-b { stroke: #77776e; stroke-width: 9; fill: none; }
.tb-c { stroke: #94948b; stroke-width: 3.500; fill: none; }
.tb-d { stroke: #5f5f57; stroke-width: 1; fill: none; }
.rk-shadow { stroke: #d4d4d4; stroke-width: 4; }
.rk-black { stroke: #111; stroke-width: 1.400; }
.rk-dots { stroke: #111; stroke-width: 2; stroke-linecap: round; fill: none; }
.rk-cap { fill: #9a9a92; stroke: #222; stroke-width: 1; }
.rk-foot { fill: #111; }

/* navigation bar */
.navbar { position: absolute; left: 842px; top: 815px; width: 237px; height: 24px; background: #f2f2f2; display: flex; align-items: center; padding-left: 3px; }
.nav-ic { width: 17px; height: 17px; flex: none; }
.nav-c { width: 6px; height: 4px; flex: none; }
.nav-gap-a { margin-left: 4px; }
.nav-gap-b { margin-left: 6px; }
.nav-gap-c { margin-left: 9px; }
.nav-gap-d { margin-left: 8px; }
.nav-gap-e { margin-left: 7px; }
.nav-gap-f { margin-left: 3px; }
.nav-gap-g { margin-left: 6px; }
.nav-gap-h { margin-left: 4px; }

/* view cube */
.viewcube { position: absolute; left: 1795px; top: 3px; width: 125px; height: 125px; }
.vc-ghost { fill: #fff; stroke: #e6e6e6; }
.vc-t { font: 10px "Liberation Sans", sans-serif; fill: #8a8a8a; }
.vc-z { font: bold 12px "Liberation Sans", sans-serif; fill: #5a5af0; }
.vc-x { font: bold 12px "Liberation Sans", sans-serif; fill: #f26a6a; }
.vc-y { font: bold 12px "Liberation Sans", sans-serif; fill: #7ee07e; }

/* timeline */
.timeline { height: 50px; flex: none; background: #f1f1f1; border-top: 2px solid #e2e2e2; border-bottom: 1px solid #b9bec6; display: flex; align-items: center; position: relative; }
.tr { width: 12px; height: 12px; margin-left: 13px; flex: none; margin-top: 1px; }
.tr-first { margin-left: 11px; }
.tl-track { margin-left: 23px; display: flex; flex-direction: column; align-self: flex-start; margin-top: 12px; }
.tl-icons { display: flex; gap: 7px; }
.tl-ic { width: 17px; height: 17px; flex: none; }
.tl-ruler {
  width: 288px; height: 8px; margin: 2px 0 0 8px; border-bottom: 2px solid #c8c8c8;
  background: repeating-linear-gradient(90deg, #c8c8c8 0, #c8c8c8 2px, transparent 2px, transparent 24px);
  border-right: 2px solid #c8c8c8;
}
.tl-marker { width: 12px; height: 32px; margin-left: -3px; align-self: flex-start; margin-top: 8px; flex: none; }
.tl-gear { width: 15px; height: 15px; margin-left: auto; margin-right: 14px; margin-top: 1px; }

/* taskbar */
.taskbar {
  height: 48px; flex: none; display: flex; align-items: center;
  background: linear-gradient(90deg, #e4eef8 0, #d4e0f8 25%, #d8e2f4 55%, #e1ecf6 100%);
  font-family: "Open Sans", "Noto Sans", sans-serif; font-size: 12px; color: #222;
}
.weather { display: flex; align-items: center; width: 705px; padding-left: 21px; }
.sun { width: 20px; height: 20px; border-radius: 50%; background: linear-gradient(160deg, #f6b82c, #f36a10); }
.weather-text { margin-left: 9px; line-height: 16px; font-size: 11.500px; }
.w-sky { color: #555; }
.win-logo { width: 23px; height: 23px; flex: none; }
.search { width: 218px; height: 30px; margin-left: 14px; border-radius: 15px; background: #f2f6fd; border: 1px solid #d3dcec; display: flex; align-items: center; padding-left: 10px; position: relative; flex: none; }
.search-ic { width: 14px; height: 14px; }
.search-text { margin-left: 11px; color: #555; font-size: 13px; }
.search-art { position: absolute; right: 1px; bottom: 0; width: 47px; height: 30px; }
.app { flex: none; }
.a-task { width: 24px; height: 23px; margin-left: 13px; }
.a-folder { width: 24px; height: 23px; margin-left: 20px; }
.a-chrome { width: 24px; height: 24px; margin-left: 20px; }
.app-active { width: 38px; height: 38px; margin-left: 13px; background: #eef3fb; border-radius: 4px; display: flex; justify-content: center; align-items: flex-start; padding-top: 7px; position: relative; flex: none; }
.a-fus { width: 22px; height: 26px; }
.fus-t { font: bold 5px "Liberation Sans", sans-serif; fill: #fff; text-anchor: middle; }
.run-bar { position: absolute; bottom: 0; left: 11px; width: 16px; height: 3px; border-radius: 2px; background: #0a6fd0; }
.app-slot { position: relative; display: flex; justify-content: center; flex: none; }
.s-note { margin-left: 16px; width: 18px; }
.s-mon { margin-left: 23px; width: 24px; }
.a-note { width: 18px; height: 24px; }
.a-mon { width: 24px; height: 19px; margin: 2px 0; }
.dot { position: absolute; left: 50%; margin-left: -3px; top: 29px; width: 6px; height: 3px; border-radius: 2px; background: #777; }
.tray { margin-left: auto; display: flex; align-items: center; padding-right: 20px; }
.caret-up { width: 12px; height: 7px; }
.tray-net { width: 16px; height: 17px; margin-left: 18px; }
.tray-vol { width: 16px; height: 14px; margin-left: 8px; }
.clock { margin-left: 12px; text-align: right; line-height: 16px; font-size: 11.600px; color: #222; width: 52px; }
.tray-bell { width: 14px; height: 15px; margin-left: 9px; }
.copilot { position: relative; width: 24px; height: 24px; margin-left: 17px; }
.cop-ic { width: 24px; height: 20px; }
.pre { position: absolute; bottom: -1px; right: 0; background: #ffd21e; color: #222; font: bold 6.500px/8px "Liberation Sans", sans-serif; padding: 0 2px; border-radius: 2px; }
```
